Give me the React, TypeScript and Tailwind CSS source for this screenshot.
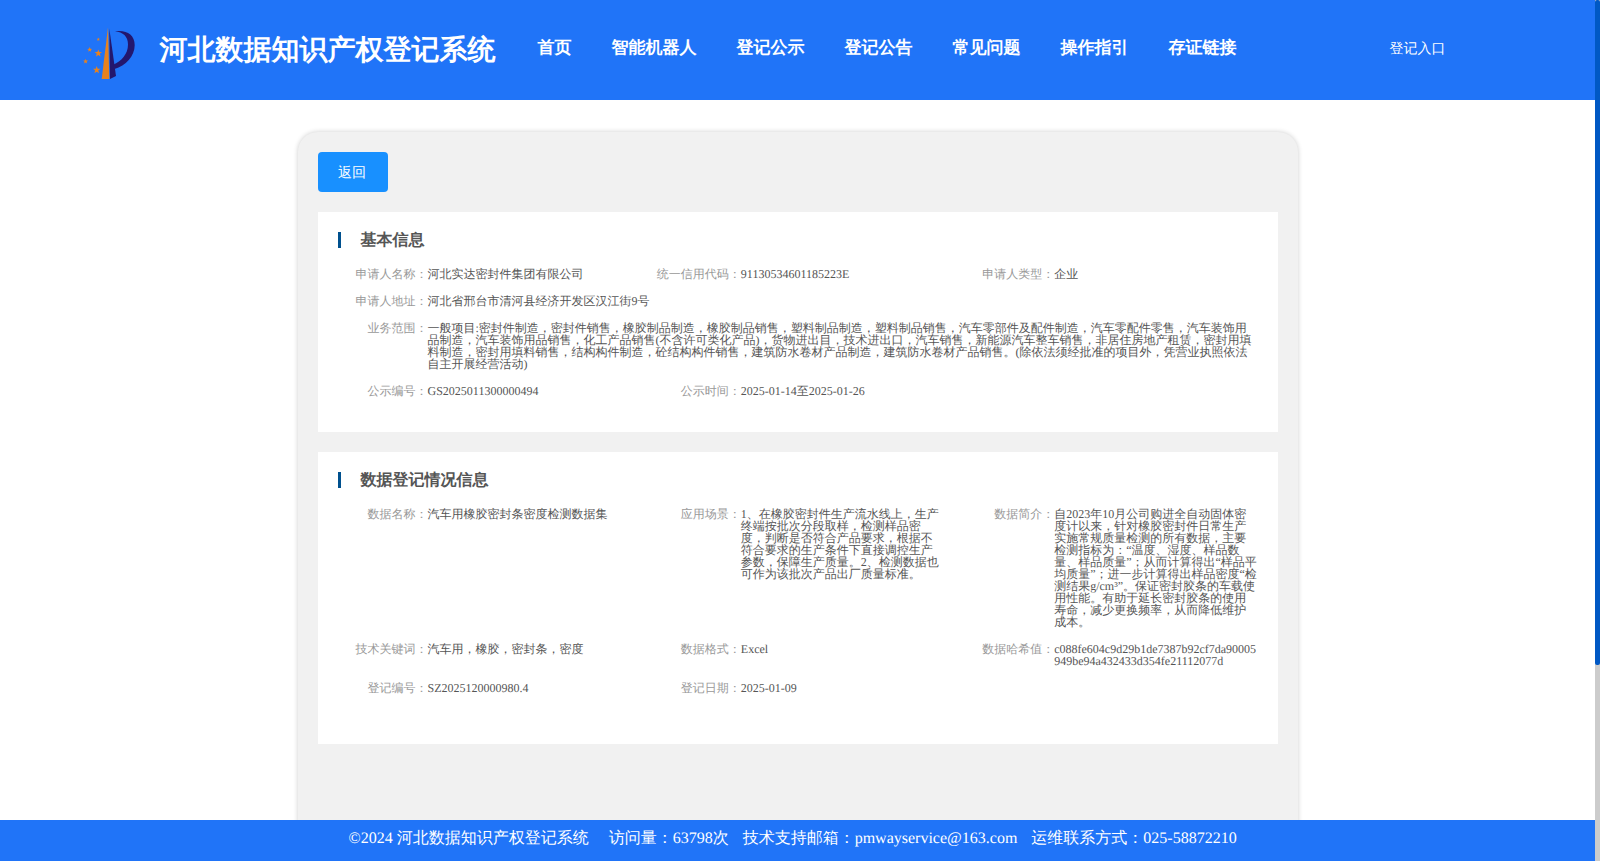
import React from 'react';

type Field = {
  label: string;
  value: string;
  full?: boolean;
};

const navItems = ['首页', '智能机器人', '登记公示', '登记公告', '常见问题', '操作指引', '存证链接'];

const basicInfo: Field[] = [
  { label: '申请人名称', value: '河北实达密封件集团有限公司' },
  { label: '统一信用代码', value: '91130534601185223E' },
  { label: '申请人类型', value: '企业' },
  { label: '申请人地址', value: '河北省邢台市清河县经济开发区汉江街9号', full: true },
  {
    label: '业务范围',
    value:
      '一般项目:密封件制造，密封件销售，橡胶制品制造，橡胶制品销售，塑料制品制造，塑料制品销售，汽车零部件及配件制造，汽车零配件零售，汽车装饰用品制造，汽车装饰用品销售，化工产品销售(不含许可类化产品)，货物进出目，技术进出口，汽车销售，新能源汽车整车销售，非居住房地产租赁，密封用填料制造，密封用填料销售，结构构件制造，砼结构构件销售，建筑防水卷材产品制造，建筑防水卷材产品销售。(除依法须经批准的项目外，凭营业执照依法自主开展经营活动)',
    full: true,
  },
  { label: '公示编号', value: 'GS2025011300000494' },
  { label: '公示时间', value: '2025-01-14至2025-01-26' },
];

const dataInfo: Field[] = [
  { label: '数据名称', value: '汽车用橡胶密封条密度检测数据集' },
  {
    label: '应用场景',
    value:
      '1、在橡胶密封件生产流水线上，生产终端按批次分段取样，检测样品密度，判断是否符合产品要求，根据不符合要求的生产条件下直接调控生产参数，保障生产质量。2、检测数据也可作为该批次产品出厂质量标准。',
  },
  {
    label: '数据简介',
    value:
      '自2023年10月公司购进全自动固体密度计以来，针对橡胶密封件日常生产实施常规质量检测的所有数据，主要检测指标为：“温度、湿度、样品数量、样品质量”；从而计算得出“样品平均质量”；进一步计算得出样品密度“检测结果g/cm³”。保证密封胶条的车载使用性能。有助于延长密封胶条的使用寿命，减少更换频率，从而降低维护成本。',
  },
  { label: '技术关键词', value: '汽车用，橡胶，密封条，密度' },
  { label: '数据格式', value: 'Excel' },
  { label: '数据哈希值', value: 'c088fe604c9d29b1de7387b92cf7da90005949be94a432433d354fe21112077d' },
  { label: '登记编号', value: 'SZ2025120000980.4' },
  { label: '登记日期', value: '2025-01-09' },
];

// x, y, radius
const stars = [
  [15.3, 26.3, 3.9],
  [13.7, 43, 3.9],
  [6.7, 22.7, 2.6],
  [2.6, 34.4, 2.6],
  [15.3, 12.4, 1.8],
];

const Logo: React.FC = () => (
  <svg className="block h-[54px] w-[54px]" viewBox="0 0 54 54">
    <path d="M25 .5L18.700 52h7.600z" fill="#e8821e" />
    <path d="M26.300 1.500L33 49l-6 3z" fill="#23176e" />
    <path d="M32 4.300C43 2.500 51.700 7.500 51.700 18c0 11.500-9 20.500-20.200 24l-.8-4.500C38.500 34 45 27 45 17.500 45 9.500 40 5 32 4.300z" fill="#23176e" />
    {stars.map(([x, y, r]) => (
      <path
        key={`${x}-${y}`}
        d="M0-1L.25-.33.95-.31.4.12.59.81 0 .42-.59.81-.4.12-.95-.31-.25-.33z"
        fill="#e8821e"
        transform={`translate(${x} ${y}) scale(${r})`}
      />
    ))}
  </svg>
);

const InfoCard: React.FC<{ title: string; fields: Field[]; className: string }> = ({ title, fields, className }) => {
  return (
    <div className={`bg-white pl-5 pt-5 ${className}`}>
      <div className="mb-5 h-4 border-l-[3px] border-[#00508e] pl-5 text-base leading-[18px] font-bold text-[#555]">{title}</div>
      <div className="grid grid-cols-3 gap-y-[15px] text-xs leading-3">
        {fields.map((field) => (
          <div key={field.label} className={field.full ? 'col-span-3 flex pr-5' : 'flex pr-5'}>
            <div className="w-[90px] shrink-0 text-right text-[#999]">{field.label}：</div>
            <div className="min-w-0 flex-1 break-words text-[#555]">{field.value}</div>
          </div>
        ))}
      </div>
    </div>
  );
};

const App: React.FC = () => {
  return (
    <div className="flex h-[861px] w-[1600px] overflow-hidden bg-white font-['Liberation_Serif',serif] [text-rendering:geometricPrecision]">
      <div className="flex w-[1595px] flex-col">
        <header className="flex h-[100px] shrink-0 bg-[#2074f8] text-white">
          <div className="pt-[27px] pl-[83px]">
            <Logo />
          </div>
          <h1 className="ml-[22.5px] pt-[31px] text-[28px] leading-10 font-bold">河北数据知识产权登记系统</h1>
          <nav className="ml-[42px] flex gap-10 pt-[38px] text-[17px] leading-5 font-bold">
            {navItems.map((item) => (
              <a key={item} href="#">
                {item}
              </a>
            ))}
          </nav>
          <a href="#" className="mr-[149.5px] ml-auto pt-10 text-sm leading-5">
            登记入口
          </a>
        </header>

        <main className="min-h-0 flex-1 overflow-hidden pt-8">
          <div className="mx-auto h-[900px] w-[1000px] rounded-[20px] bg-[#f1f1f1] p-5 shadow-[0_0_5px_rgba(0,0,0,0.2)]">
            <button className="mb-5 block h-10 w-[70px] rounded bg-[#1890ff] pt-0.5 pr-px text-sm text-white">返回</button>
            <InfoCard title="基本信息" fields={basicInfo} className="mb-5 h-[220px]" />
            <InfoCard title="数据登记情况信息" fields={dataInfo} className="h-[292px]" />
          </div>
        </main>

        <footer className="flex h-[41px] shrink-0 bg-[#2074f8] pt-[9px] pl-[348.5px] text-base leading-5 text-white">
          <span>©2024 河北数据知识产权登记系统</span>
          <span className="ml-5">访问量：63798次</span>
          <span className="ml-3.5">技术支持邮箱：pmwayservice@163.com</span>
          <span className="ml-3.5">运维联系方式：025-58872210</span>
        </footer>
      </div>
      <div className="w-[5px] bg-[#ccc]">
        <div className="h-[665px] rounded-[2px] bg-[#0058c4]" />
      </div>
    </div>
  );
};

export default App;
